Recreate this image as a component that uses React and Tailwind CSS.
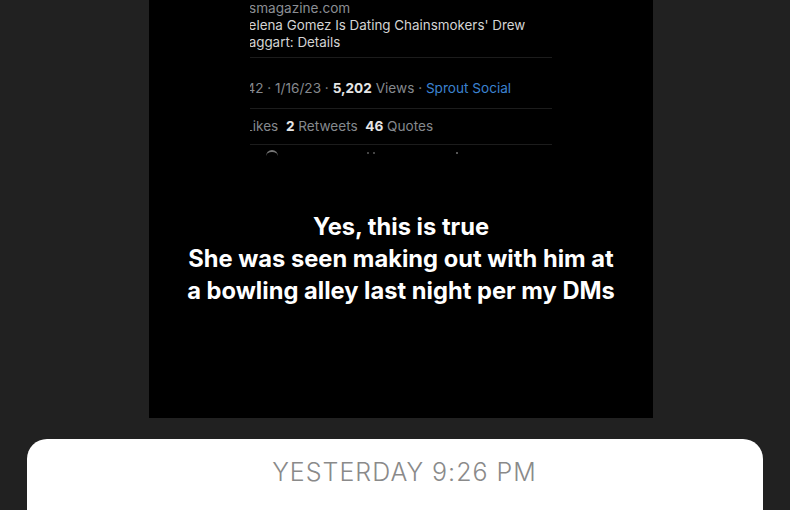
export default function App() {
  const tw = { fontFamily: 'Inter, "Noto Sans", sans-serif' };
  return (
    <div className="h-[510px] w-[790px] overflow-hidden bg-[#212121] flex flex-col">
      <div className="ml-[149px] w-[504px] h-[418px] bg-black flex flex-col shrink-0">
        <div className="ml-[101px] w-[302px] overflow-hidden text-[13.6px] leading-[17px]" style={tw}>
          <div className="whitespace-nowrap text-[#8b8f94] -ml-[9px]">usmagazine.com</div>
          <div className="whitespace-nowrap text-[#d4d4d4] -ml-[10px] text-[13.4px]">Selena Gomez Is Dating Chainsmokers' Drew</div>
          <div className="whitespace-nowrap text-[#d4d4d4] -ml-[9px] text-[13.4px]">Taggart: Details</div>
          <div className="mt-[6px] h-px bg-[#1c1c1c]" />
          <div className="mt-[22px] whitespace-nowrap text-[#85898e] -ml-[13px]">
            1:42 · 1/16/23 · <span className="font-bold text-[#e6e6e6]">5,202</span> Views · <span className="text-[#3b82d0]">Sprout Social</span>
          </div>
          <div className="mt-[11px] h-px bg-[#1c1c1c]" />
          <div className="mt-[9px] whitespace-nowrap text-[#85898e] -ml-[5px]">
            Likes&nbsp; <span className="font-bold text-[#e6e6e6]">2</span> Retweets&nbsp; <span className="font-bold text-[#e6e6e6]">46</span> Quotes
          </div>
          <div className="mt-[9px] h-px bg-[#1c1c1c]" />
          <div className="relative h-[12px]">
            <div className="absolute left-[16px] top-[5px] w-[12px] h-[6px] rounded-t-full border-t-2 border-[#777]" />
            <div className="absolute left-[117px] top-[7px] w-[2px] h-[2px] bg-[#444]" />
            <div className="absolute left-[123px] top-[7px] w-[2px] h-[2px] bg-[#444]" />
            <div className="absolute left-[206px] top-[7px] w-[2px] h-[2px] bg-[#555]" />
          </div>
        </div>
        <div
          className="mt-[54px] text-center text-white font-bold text-[23.7px] leading-[32px]"
          style={{ fontFamily: 'Inter, "Open Sans", sans-serif' }}
        >
          <div>Yes, this is true</div>
          <div>She was seen making out with him at</div>
          <div>a bowling alley last night per my DMs</div>
        </div>
      </div>
      <div className="mt-[21px] ml-[27px] w-[736px] flex-1 bg-white rounded-t-[20px] pt-[19px] pl-[19px] text-center">
        <div
          className="text-[25px] leading-[28px] text-[#8a8a8a] tracking-[1px]"
          style={{ fontFamily: 'Inter, "Noto Sans", sans-serif', fontWeight: 300 }}
        >
          YESTERDAY 9:26 PM
        </div>
      </div>
    </div>
  );
}
